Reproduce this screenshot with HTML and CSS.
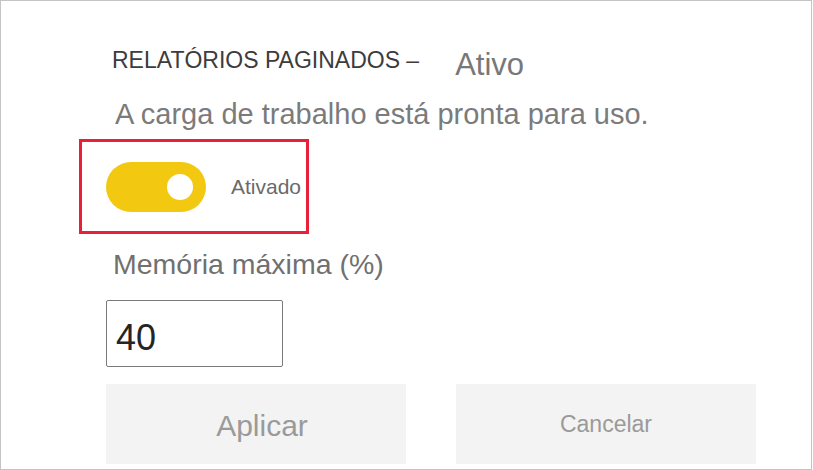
FILE: index.html
```html
<!DOCTYPE html>
<html lang="pt">
<head>
<meta charset="utf-8">
<title>Relatórios paginados</title>
<link rel="stylesheet" href="styles.css">
</head>
<body>
<div class="frame">
  <div class="header-row">
    <span class="workload">RELATÓRIOS PAGINADOS –</span>
    <span class="status">Ativo</span>
  </div>
  <p class="desc">A carga de trabalho está pronta para uso.</p>
  <div class="highlight">
    <div class="toggle"><span class="knob"></span></div>
    <span class="toggle-label">Ativado</span>
  </div>
  <p class="field-label">Memória máxima (%)</p>
  <div class="input">40</div>
  <div class="actions">
    <button class="btn btn-apply">Aplicar</button>
    <button class="btn btn-cancel">Cancelar</button>
  </div>
</div>
</body>
</html>
```
FILE: styles.css
```css
html, body {
  margin: 0;
  padding: 0;
  background: #ffffff;
}
body {
  font-family: "Liberation Sans", Arial, sans-serif;
}
.frame {
  width: 812px;
  height: 470px;
  box-sizing: border-box;
  border: 1px solid #c4c4c4;
  padding: 44px 0 0 105px;
  display: flex;
  flex-direction: column;
  align-items: flex-start;
}
.header-row {
  display: flex;
  align-items: flex-start;
}
.workload {
  font-size: 23px;
  line-height: 30px;
  color: #3c3c3c;
  margin-left: 6px;
}
.status {
  font-size: 31px;
  line-height: 36px;
  color: #787878;
  margin-top: 2px;
  margin-left: 36px;
}
.desc {
  margin: 14px 0 0 9px;
  font-size: 29px;
  line-height: 34px;
  color: #7b7b7b;
}
.highlight {
  margin: 8px 0 0 -27px;
  width: 230px;
  height: 95px;
  box-sizing: border-box;
  border: 3px solid #e8203a;
  padding: 0 0 0 24px;
  display: flex;
  align-items: center;
}
.toggle {
  width: 100px;
  height: 50px;
  border-radius: 25px;
  background: #f2c811;
  display: flex;
  align-items: center;
  justify-content: flex-end;
  padding-right: 13px;
  box-sizing: border-box;
}
.knob {
  width: 26px;
  height: 26px;
  border-radius: 50%;
  background: #ffffff;
}
.toggle-label {
  margin-left: 25px;
  font-size: 21px;
  line-height: 24px;
  color: #6a6a6a;
}
.field-label {
  margin: 14px 0 0 7px;
  font-size: 28.5px;
  line-height: 32px;
  color: #707070;
}
.input {
  margin-top: 20px;
  width: 177px;
  height: 67px;
  box-sizing: border-box;
  border: 1px solid #7a7a7a;
  border-radius: 2px;
  padding: 19px 0 0 9px;
  font-size: 36px;
  line-height: 36px;
  color: #252525;
}
.actions {
  margin-top: 17px;
  display: flex;
  gap: 50px;
}
.btn {
  width: 300px;
  height: 80px;
  border: none;
  background: #f3f3f3;
  font-family: "Liberation Sans", Arial, sans-serif;
  color: #9a9a9a;
  padding: 0;
}
.btn-apply {
  font-size: 30px;
  padding-left: 12px;
  padding-top: 4px;
}
.btn-cancel {
  font-size: 23px;
}
```
